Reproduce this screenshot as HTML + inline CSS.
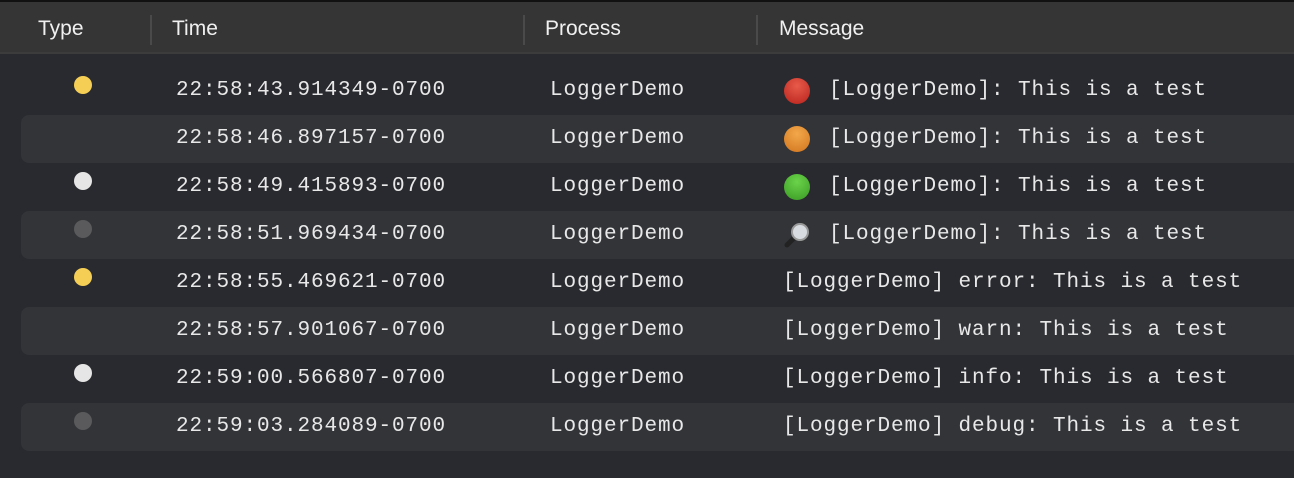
<!DOCTYPE html>
<html><head><style>
body{margin:0;width:1294px;height:478px;background:#292a2f;overflow:hidden;font-family:"Liberation Sans",sans-serif;position:relative}
.hdr{position:absolute;left:0;top:0;width:1294px;height:54px;background:#353535;border-top:2px solid #111;box-sizing:border-box;border-bottom:2px solid #3c3c3c}
.hdr span{position:absolute;top:15px;color:#f0f0f0;font-size:21px}
.sep{position:absolute;top:13px;width:2px;height:30px;background:#4a4a4a}
.row{position:absolute;left:0;width:1294px;height:48px}
.alt{background:#323438;left:21px;border-radius:8px 0 0 8px}
.t{position:absolute;top:12px;color:#e8e8e8;font-family:"Liberation Mono",monospace;font-size:21px;letter-spacing:0.9px;white-space:pre}
.dot{position:absolute;left:74px;top:9px;width:18px;height:18px;border-radius:50%}
.em{position:absolute;left:784px;top:11px;width:26px;height:26px;border-radius:50%}
</style></head><body>
<div class="hdr">
<span style="left:38px">Type</span><div class="sep" style="left:150px"></div>
<span style="left:172px">Time</span><div class="sep" style="left:523px"></div>
<span style="left:545px">Process</span><div class="sep" style="left:756px"></div>
<span style="left:779px">Message</span>
</div>
<div class="row" style="top:67px"><div class="dot" style="background:#f5cf55"></div><div class="t" style="left:176px">22:58:43.914349-0700</div><div class="t" style="left:550px">LoggerDemo</div><div class="em" style="background:radial-gradient(circle at 50% 30%,#e85a4a,#b8231c)"></div><div class="t" style="left:829px">[LoggerDemo]: This is a test</div></div>
<div class="row alt" style="top:115px"></div>
<div class="row" style="top:115px"><div class="t" style="left:176px">22:58:46.897157-0700</div><div class="t" style="left:550px">LoggerDemo</div><div class="em" style="background:radial-gradient(circle at 50% 30%,#f3a84a,#d0741f)"></div><div class="t" style="left:829px">[LoggerDemo]: This is a test</div></div>
<div class="row" style="top:163px"><div class="dot" style="background:#e6e6e6"></div><div class="t" style="left:176px">22:58:49.415893-0700</div><div class="t" style="left:550px">LoggerDemo</div><div class="em" style="background:radial-gradient(circle at 50% 30%,#6ad34a,#3a9a24)"></div><div class="t" style="left:829px">[LoggerDemo]: This is a test</div></div>
<div class="row alt" style="top:211px"></div>
<div class="row" style="top:211px"><div class="dot" style="background:#5a5a5c"></div><div class="t" style="left:176px">22:58:51.969434-0700</div><div class="t" style="left:550px">LoggerDemo</div>
<svg style="position:absolute;left:783px;top:10px" width="28" height="28"><line x1="4" y1="24" x2="12" y2="16" stroke="#222" stroke-width="5" stroke-linecap="round"/><circle cx="17" cy="11" r="8" fill="#d8dce0" stroke="#999" stroke-width="2"/></svg>
<div class="t" style="left:829px">[LoggerDemo]: This is a test</div></div>
<div class="row" style="top:259px"><div class="dot" style="background:#f5cf55"></div><div class="t" style="left:176px">22:58:55.469621-0700</div><div class="t" style="left:550px">LoggerDemo</div><div class="t" style="left:783px">[LoggerDemo] error: This is a test</div></div>
<div class="row alt" style="top:307px"></div>
<div class="row" style="top:307px"><div class="t" style="left:176px">22:58:57.901067-0700</div><div class="t" style="left:550px">LoggerDemo</div><div class="t" style="left:783px">[LoggerDemo] warn: This is a test</div></div>
<div class="row" style="top:355px"><div class="dot" style="background:#e6e6e6"></div><div class="t" style="left:176px">22:59:00.566807-0700</div><div class="t" style="left:550px">LoggerDemo</div><div class="t" style="left:783px">[LoggerDemo] info: This is a test</div></div>
<div class="row alt" style="top:403px"></div>
<div class="row" style="top:403px"><div class="dot" style="background:#5a5a5c"></div><div class="t" style="left:176px">22:59:03.284089-0700</div><div class="t" style="left:550px">LoggerDemo</div><div class="t" style="left:783px">[LoggerDemo] debug: This is a test</div></div>
</body></html>
